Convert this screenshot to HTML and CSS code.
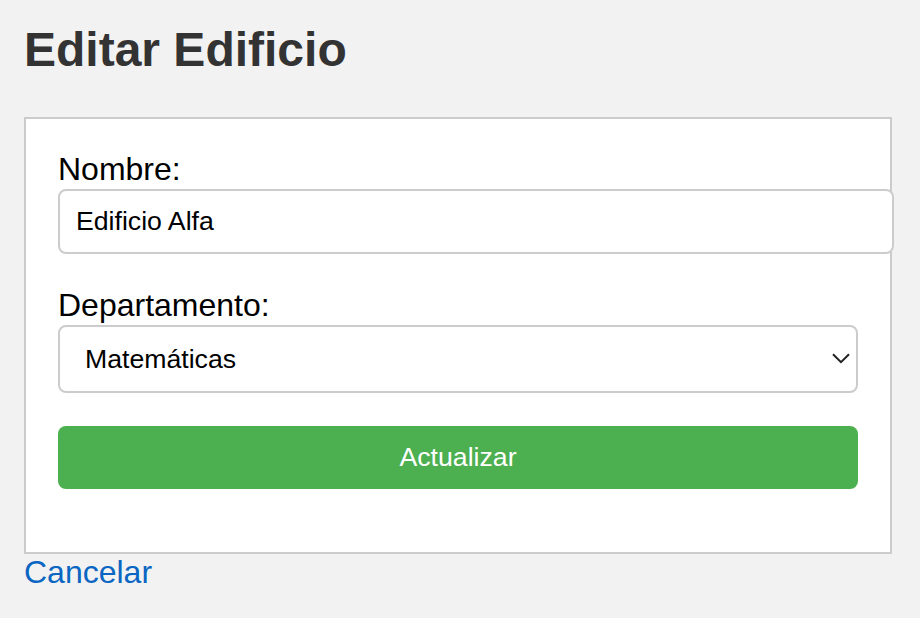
FILE: index.html
```html
<!DOCTYPE html>
<html lang="es">
<head>
<meta charset="utf-8">
<title>Editar Edificio</title>
<link rel="stylesheet" href="styles.css">
</head>
<body>
  <h1 class="title">Editar Edificio</h1>
  <form class="card">
    <div class="field">
      <label class="label" for="nombre">Nombre:</label>
      <input class="text-input" id="nombre" type="text" value="Edificio Alfa">
    </div>
    <div class="field">
      <label class="label" for="dep">Departamento:</label>
      <div class="select-wrap">
        <select class="select" id="dep">
          <option>Matemáticas</option>
        </select>
        <svg class="chevron" width="18" height="11" viewBox="0 0 18 11" aria-hidden="true">
          <path d="M1 1.2 L9 9.2 L17 1.2" fill="none" stroke="#222" stroke-width="2"/>
        </svg>
      </div>
    </div>
    <button class="btn" type="button">Actualizar</button>
  </form>
  <a class="cancel" href="#">Cancelar</a>
</body>
</html>
```

FILE: styles.css
```css
html, body {
  margin: 0;
  padding: 0;
}
body {
  background: #f2f2f2;
  font-family: "Liberation Sans", Arial, Helvetica, sans-serif;
  padding: 0 24px;
  color: #000;
}
.title {
  margin: 0;
  padding-top: 22px;
  font-size: 48px;
  line-height: 55px;
  font-weight: bold;
  color: #333;
}
.card {
  margin-top: 40px;
  width: 800px;
  padding: 32px 32px 31px;
  background: #fff;
  border: 2px solid #ccc;
}
.field {
  margin-bottom: 33px;
}
.label {
  display: block;
  font-size: 32px;
  line-height: 36px;
  margin-bottom: 2px;
}
.text-input {
  display: block;
  box-sizing: content-box;
  width: 800px;
  height: 31px;
  padding: 15px 16px;
  margin: 0;
  border: 2px solid #ccc;
  border-radius: 8px;
  font-family: inherit;
  font-size: 26.67px;
  color: #000;
  background: #fff;
  outline: none;
}
.select-wrap {
  position: relative;
  width: 800px;
}
.select {
  display: block;
  box-sizing: border-box;
  width: 800px;
  height: 68px;
  margin: 0;
  padding: 0 60px 0 25px;
  border: 2px solid #ccc;
  border-radius: 8px;
  background: #fff;
  font-family: inherit;
  font-size: 26.67px;
  color: #000;
  -webkit-appearance: none;
  appearance: none;
  outline: none;
}
.chevron {
  position: absolute;
  left: 774px;
  top: 28px;
}
.btn {
  display: block;
  width: 800px;
  height: 63px;
  margin: 0 0 32px;
  padding: 0;
  border: none;
  border-radius: 8px;
  background: #4caf50;
  color: #fff;
  font-family: inherit;
  font-size: 26.67px;
  cursor: pointer;
}
.cancel {
  display: inline-block;
  font-size: 32px;
  line-height: 36px;
  color: #0a66c2;
  text-decoration: none;
}
```
